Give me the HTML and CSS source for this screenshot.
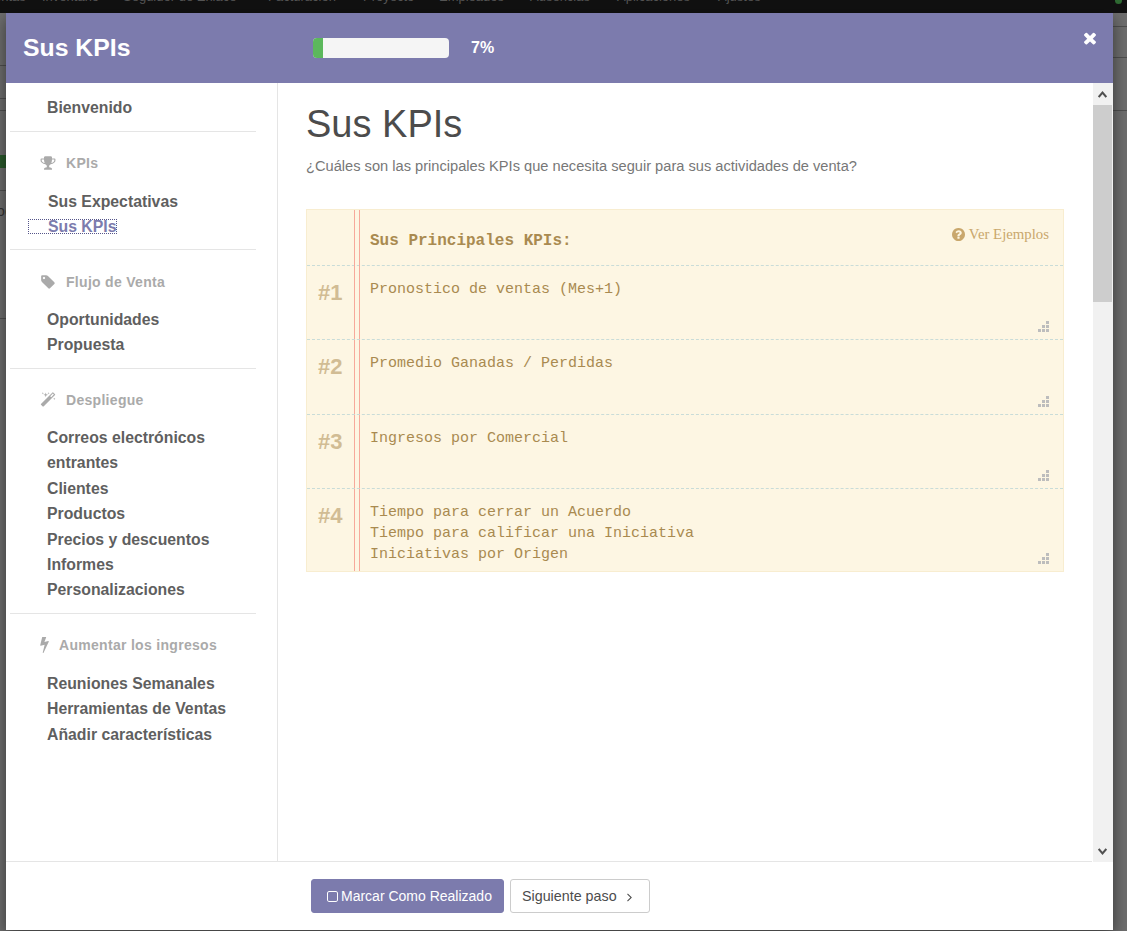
FILE: index.html
```html
<!DOCTYPE html>
<html lang="es">
<head>
  <meta charset="UTF-8">
  <title>Sus KPIs</title>
  <link rel="stylesheet" href="styles.css">
</head>
<body>

<svg class="icon-defs" aria-hidden="true">
  <symbol id="i-trophy" viewBox="0 0 1792 1792"><path d="M522 883q-74-162-74-371h-256v96q0 78 94.5 162t235.5 113zm1078-275v-96h-256q0 209-74 371 141-29 235.5-113t94.5-162zm128-128v128q0 71-41.5 143t-112 130-173 97.5-215.5 44.5q-42 54-95 95-38 34-52.5 72.5t-14.5 89.5q0 54 30.5 91t97.5 37q75 0 133.5 45.5t58.5 114.5v64q0 14-9 23t-23 9h-832q-14 0-23-9t-9-23v-64q0-69 58.5-114.5t133.5-45.5q67 0 97.5-37t30.5-91q0-51-14.5-89.5t-52.5-72.5q-53-41-95-95-113-5-215.5-44.5t-173-97.5-112-130-41.5-143v-128q0-40 28-68t68-28h288v-96q0-66 47-113t113-47h576q66 0 113 47t47 113v96h288q40 0 68 28t28 68z"/></symbol>
  <symbol id="i-tag" viewBox="0 0 1792 1792"><path d="M576 448q0-53-37.5-90.5t-90.5-37.5-90.5 37.5-37.5 90.5 37.5 90.5 90.5 37.5 90.5-37.5 37.5-90.5zm1067 576q0 53-37 90l-491 492q-39 37-91 37-53 0-90-37l-715-716q-38-37-64.5-101t-26.5-117v-416q0-52 38-90t90-38h416q53 0 117 26.5t102 64.5l715 714q37 39 37 91z"/></symbol>
  <symbol id="i-magic" viewBox="0 0 1792 1792"><path d="M1254 581l293-293-107-107-293 293zm447-293q0 27-18 45l-1286 1286q-18 18-45 18t-45-18l-198-198q-18-18-18-45t18-45l1286-1286q18-18 45-18t45 18l198 198q18 18 18 45zm-1351-190l98 30-98 30-30 98-30-98-98-30 98-30 30-98zm350 162l196 60-196 60-60 196-60-196-196-60 196-60 60-196zm930 478l98 30-98 30-30 98-30-98-98-30 98-30 30-98zm-640-640l98 30-98 30-30 98-30-98-98-30 98-30 30-98z"/></symbol>
  <symbol id="i-bolt" viewBox="448 128 896 1664"><path d="M1333 566q18 20 7 44l-540 1157q-13 25-42 25-4 0-14-2-17-5-25.5-19t-4.5-30l197-808-406 101q-4 1-12 1-18 0-31-11-18-15-13-39l201-825q4-14 16-23t28-9h328q19 0 32 12.5t13 29.5q0 8-5 18l-171 463 396-98q8-2 12-2 19 0 34 15z"/></symbol>
  <symbol id="i-question" viewBox="128 128 1536 1536"><path d="M1024 1376v-192q0-14-9-23t-23-9h-192q-14 0-23 9t-9 23v192q0 14 9 23t23 9h192q14 0 23-9t9-23zm256-672q0-88-55.5-163t-138.5-116-170-41q-243 0-371 213-15 24 8 42l132 100q7 6 19 6 16 0 25-12 53-68 86-92 34-24 86-24 48 0 85.5 26t37.5 59q0 38-20 61t-68 45q-63 28-115.5 86.5t-52.5 125.5v36q0 14 9 23t23 9h192q14 0 23-9t9-23q0-19 21.5-49.5t54.5-49.5q32-18 49-28.5t46-35 44.5-48 28-60.5 12.5-81zm384 192q0 209-103 385.5t-279.5 279.5-385.5 103-385.5-103-279.5-279.5-103-385.5 103-385.5 279.5-279.5 385.5-103 385.5 103 279.5 279.5 103 385.5z"/></symbol>
  <symbol id="i-close" viewBox="0 0 1792 1792"><path d="M1490 1322q0 40-28 68l-136 136q-28 28-68 28t-68-28l-294-294-294 294q-28 28-68 28t-68-28l-136-136q-28-28-28-68t28-68l294-294-294-294q-28-28-28-68t28-68l136-136q28-28 68-28t68 28l294 294 294-294q28-28 68-28t68 28l136 136q28 28 28 68t-28 68l-294 294 294 294q28 28 28 68z"/></symbol>
  <symbol id="i-square" viewBox="0 128 1408 1408"><path d="M1120 256h-832q-66 0-113 47t-47 113v832q0 66 47 113t113 47h832q66 0 113-47t47-113v-832q0-66-47-113t-113-47zm288 160v832q0 119-84.5 203.5t-203.5 84.5h-832q-119 0-203.5-84.5t-84.5-203.5v-832q0-119 84.5-203.5t203.5-84.5h832q119 0 203.5 84.5t84.5 203.5z"/></symbol>
  <symbol id="i-angle" viewBox="576 384 608 1152"><path d="M1171 960q0 13-10 23l-466 466q-10 10-23 10t-23-10l-50-50q-10-10-10-23t10-23l393-393-393-393q-10-10-10-23t10-23l50-50q10-10 23-10t23 10l466 466q10 10 10 23z"/></symbol>
  <symbol id="i-grip" viewBox="0 0 11 11"><path d="M8 0h3v3H8zM4 4h3v3H4zM8 4h3v3H8zM0 8h3v3H0zM4 8h3v3H4zM8 8h3v3H8z"/></symbol>
</svg>

<!-- the app behind the dialog -->
<nav class="topbar">
  <span class="nav-sales">Ventas</span>
  <span class="nav-inv">Inventario</span>
  <span class="nav-link">Seguidor de Enlace</span>
  <span class="nav-fact">Facturación</span>
  <span class="nav-proj">Proyecto</span>
  <span class="nav-emp">Empleados</span>
  <span class="nav-aus">Ausencias</span>
  <span class="nav-apps">Aplicaciones</span>
  <span class="nav-set">Ajustes</span>
  <i class="nav-avatar"></i>
</nav>
<span class="behind-text">Doc</span>

<div class="modal">
  <header class="modal-head">
    <h2 class="modal-title">Sus KPIs</h2>
    <div class="progress"><div class="progress-bar"></div></div>
    <span class="progress-val">7%</span>
    <svg class="close"><use href="#i-close"/></svg>
  </header>

  <div class="modal-body">
    <aside class="sidebar">
      <ul class="menu">
        <li>Bienvenido</li>
      </ul>
      <hr>
      <h4 class="menu-title title-kpi"><svg class="ic ic-trophy"><use href="#i-trophy"/></svg>KPIs</h4>
      <ul class="menu menu-kpi">
        <li>Sus Expectativas</li>
        <li class="active"><a>Sus KPIs</a></li>
      </ul>
      <hr>
      <h4 class="menu-title title-flow"><svg class="ic ic-tag"><use href="#i-tag"/></svg>Flujo de Venta</h4>
      <ul class="menu menu-flow">
        <li>Oportunidades</li>
        <li>Propuesta</li>
      </ul>
      <hr>
      <h4 class="menu-title title-deploy"><svg class="ic ic-magic"><use href="#i-magic"/></svg>Despliegue</h4>
      <ul class="menu menu-deploy">
        <li>Correos electrónicos entrantes</li>
        <li>Clientes</li>
        <li>Productos</li>
        <li>Precios y descuentos</li>
        <li>Informes</li>
        <li>Personalizaciones</li>
      </ul>
      <hr>
      <h4 class="menu-title title-more"><svg class="ic ic-bolt"><use href="#i-bolt"/></svg>Aumentar los ingresos</h4>
      <ul class="menu">
        <li>Reuniones Semanales</li>
        <li>Herramientas de Ventas</li>
        <li>Añadir características</li>
      </ul>
    </aside>

    <main class="content">
      <h1>Sus KPIs</h1>
      <p class="lead">¿Cuáles son las principales KPIs que necesita seguir para sus actividades de venta?</p>

      <div class="paper">
        <div class="paper-head">
          <b>Sus Principales KPIs:</b>
          <span class="examples"><svg class="ic-q"><use href="#i-question"/></svg>Ver Ejemplos</span>
        </div>
        <div class="paper-row row-a">
          <span class="num">#1</span>
          <div class="note">Pronostico de ventas (Mes+1)</div>
          <svg class="grip"><use href="#i-grip"/></svg>
        </div>
        <div class="paper-row row-b">
          <span class="num">#2</span>
          <div class="note">Promedio Ganadas / Perdidas</div>
          <svg class="grip"><use href="#i-grip"/></svg>
        </div>
        <div class="paper-row row-a">
          <span class="num">#3</span>
          <div class="note">Ingresos por Comercial</div>
          <svg class="grip"><use href="#i-grip"/></svg>
        </div>
        <div class="paper-row row-c">
          <span class="num">#4</span>
          <div class="note">Tiempo para cerrar un Acuerdo<br>Tiempo para calificar una Iniciativa<br>Iniciativas por Origen</div>
          <svg class="grip"><use href="#i-grip"/></svg>
        </div>
      </div>
    </main>

    <div class="scrollbar">
      <div class="sb-btn"><svg viewBox="0 0 9 7"><path d="M0.7 6L4.5 1.6 8.3 6"/></svg></div>
      <div class="sb-thumb"></div>
      <div class="sb-track"></div>
      <div class="sb-btn sb-down"><svg viewBox="0 0 9 7"><path d="M0.7 1L4.5 5.4 8.3 1"/></svg></div>
    </div>
  </div>

  <footer class="modal-foot">
    <button class="btn btn-primary"><svg class="ic-sq"><use href="#i-square"/></svg>Marcar Como Realizado</button>
    <button class="btn btn-default">Siguiente paso<svg class="ic-angle"><use href="#i-angle"/></svg></button>
  </footer>
</div>

</body>
</html>
```

FILE: styles.css
```css
* {
  box-sizing: border-box;
}
html, body {
  height: 100%;
}
body {
  margin: 0;
  overflow: hidden;
  position: relative;
  font-family: "Liberation Sans", Arial, sans-serif;
  font-size: 14px;
  color: #4c4c4c;
  background-color: #6e6e6e;
  /* faded rows of the page behind the dialog */
  background-image:
    linear-gradient(#4f4f4f, #4f4f4f),
    linear-gradient(#4f4f4f, #4f4f4f),
    linear-gradient(#4f4f4f, #4f4f4f),
    linear-gradient(#2a5a2c, #2a5a2c),
    linear-gradient(#4f4f4f, #4f4f4f),
    linear-gradient(#4f4f4f, #4f4f4f),
    linear-gradient(#4f4f4f, #4f4f4f),
    linear-gradient(#4f4f4f, #4f4f4f),
    linear-gradient(#4f4f4f, #4f4f4f);
  background-repeat: no-repeat;
  background-size: 6px 1px, 6px 1px, 100% 1px, 6px 13px, 6px 1px, 6px 1px, 14px 1px, 14px 1px, 6px 1px;
  background-position: 0 65px, 0 98px, 0 110px, 0 155px, 0 190px, 0 318px, right 0 top 26px, right 0 top 57px, 0 0;
}
.icon-defs {
  position: absolute;
  width: 0;
  height: 0;
}

/* app behind */
.topbar {
  height: 13px;
  background-color: #111;
  color: #555;
  font-size: 13px;
  line-height: 13px;
  overflow: hidden;
  position: relative;
}
.topbar span {
  position: absolute;
  top: -10px;
  white-space: nowrap;
}
.nav-sales { left: -14px; }
.nav-inv { left: 42px; }
.nav-link { left: 123px; }
.nav-fact { left: 268px; }
.nav-proj { left: 363px; }
.nav-emp { left: 439px; }
.nav-aus { left: 530px; }
.nav-apps { left: 617px; }
.nav-set { left: 718px; }
.nav-avatar {
  position: absolute;
  top: -4px;
  left: 1115px;
  width: 7px;
  height: 8px;
  border-radius: 0 0 4px 4px;
  background-color: #2f6a33;
}
.behind-text {
  position: absolute;
  left: -13px;
  top: 203px;
  color: #333;
  font-size: 14px;
}

/* dialog */
.modal {
  position: absolute;
  left: 6px;
  top: 13px;
  width: 1107px;
  height: 917px;
  background-color: #fff;
  display: flex;
  flex-direction: column;
  box-shadow: 0 5px 15px rgba(0,0,0,0.5);
}
.modal-head {
  height: 70px;
  flex: none;
  background-color: #7c7bad;
  color: #fff;
  display: flex;
  align-items: center;
  padding-left: 17px;
}
.modal-title {
  margin: 0;
  width: 290px;
  font-size: 24.8px;
  font-weight: bold;
}
.progress {
  width: 136px;
  height: 20px;
  background-color: #f5f5f5;
  border-radius: 4px;
  overflow: hidden;
}
.progress-bar {
  width: 10px;
  height: 100%;
  background-color: #5cb85c;
}
.progress-val {
  margin-left: 22px;
  font-size: 16px;
  font-weight: bold;
}
.close {
  width: 18px;
  height: 18px;
  fill: #fff;
  align-self: flex-start;
  margin: 16px 14px 0 auto;
}

.modal-body {
  flex: 1;
  display: flex;
  min-height: 0;
}

/* sidebar */
.sidebar {
  width: 272px;
  flex: none;
  border-right: 1px solid #e5e5e5;
  padding: 12px 21px 0 4px;
}
.sidebar hr {
  border: 0;
  border-top: 1px solid #e5e5e5;
  margin: 11px 0 0;
}
.menu {
  list-style: none;
  margin: 0;
  padding: 0 0 0 37px;
  font-size: 15.8px;
  font-weight: bold;
  line-height: 25.4px;
  color: #5f5f5f;
}
.menu-kpi {
  padding-left: 38px;
  margin-bottom: -2.5px;
}
.menu-flow {
  margin-bottom: -1px;
}
.menu-deploy {
  margin-bottom: -0.6px;
}
.active {
  color: #7c7bad;
}
.active a {
  display: inline-block;
  line-height: 13px;
  padding: 0 0 0 19px;
  margin-left: -19px;
  outline: 1px dotted #55558a;
  vertical-align: 1px;
}
.menu-title {
  margin: 21px 0 15px;
  padding-left: 30px;
  height: 20px;
  display: flex;
  align-items: center;
  font-size: 14px;
  font-weight: bold;
  line-height: 20px;
  letter-spacing: 0.3px;
  color: #aaa;
}
.title-kpi { margin-bottom: 16px; }
.title-flow { margin-top: 22px; }
.title-deploy { margin-top: 21.5px; }
.title-more { margin-top: 20.8px; margin-bottom: 15.8px; }
.ic {
  height: 16px;
  fill: #aaa;
  flex: none;
  margin-right: 10px;
}
.ic-trophy { width: 16px; }
.ic-tag { width: 16px; }
.ic-magic { width: 16px; }
.ic-bolt { width: 9px; }

/* main */
.content {
  flex: 1;
  min-width: 0;
  padding: 0 29px 0 28px;
}
.content h1 {
  margin: 20px 0 0;
  font-size: 38px;
  font-weight: normal;
  line-height: 42px;
  color: #4c4c4c;
}
.lead {
  margin: 11px 0 32px;
  font-size: 14.65px;
  line-height: 21px;
  color: #777;
}
.paper {
  position: relative;
  background-color: #fdf6e3;
  border: 1px solid #f8edd0;
  font-family: "Liberation Mono", "Courier New", monospace;
  color: #a98a50;
}
.paper::before {
  content: "";
  position: absolute;
  top: 0;
  bottom: 0;
  left: 47px;
  width: 4px;
  border-left: 1px solid #f7a99b;
  border-right: 1px solid #f7a99b;
}
.paper-head {
  height: 56px;
  padding: 20px 14px 0 63px;
  border-bottom: 1px dashed #c9dcd8;
  display: flex;
  justify-content: space-between;
  font-size: 16px;
  line-height: 22px;
}
.examples {
  margin-top: -7px;
  font-family: "Liberation Serif", "Times New Roman", serif;
  font-size: 14.8px;
  color: #c9a76c;
  display: flex;
  align-items: center;
  height: 22px;
}
.ic-q {
  width: 13px;
  height: 13px;
  fill: #c9a76c;
  margin-right: 4px;
}
.paper-row {
  position: relative;
  display: flex;
  border-bottom: 1px dashed #c9dcd8;
}
.row-a { height: 74px; }
.row-b { height: 75px; }
.row-c { height: 82px; border-bottom: 0; }
.num {
  width: 63px;
  flex: none;
  padding: 13px 0 0 11px;
  font-family: "Liberation Sans", Arial, sans-serif;
  font-size: 22px;
  font-weight: bold;
  line-height: 28px;
  color: #d1bc94;
}
.note {
  padding-top: 13px;
  font-size: 15px;
  line-height: 21px;
}
.grip {
  position: absolute;
  right: 14px;
  bottom: 7px;
  width: 11px;
  height: 11px;
  fill: #bdbdbd;
}

/* fake scrollbar, same look as the browser one */
.scrollbar {
  width: 20px;
  flex: none;
  margin-bottom: -1px;
  background-color: #f1f1f1;
  display: flex;
  flex-direction: column;
}
.sb-btn {
  height: 22px;
  flex: none;
  display: flex;
  justify-content: center;
  padding: 8px 1px 0 0;
}
.sb-btn svg {
  width: 9px;
  height: 7px;
  fill: none;
  stroke: #505050;
  stroke-width: 2;
}
.sb-thumb {
  height: 197px;
  flex: none;
  margin-right: 1px;
  background-color: #cdcdcd;
}
.sb-track {
  flex: 1;
}

/* footer */
.modal-foot {
  height: 69px;
  flex: none;
  margin-right: 21px;
  border-top: 1px solid #e5e5e5;
  padding: 17px 0 0 305px;
  display: flex;
  gap: 6px;
  align-items: flex-start;
}
.btn {
  height: 34px;
  border-radius: 3px;
  font-family: inherit;
  font-size: 14px;
  line-height: 20px;
  padding: 0;
  display: flex;
  align-items: center;
}
.btn-primary {
  width: 193px;
  padding-left: 15px;
  background-color: #7c7bad;
  border: 1px solid #7c7bad;
  color: #fff;
}
.btn-default {
  width: 140px;
  padding-left: 11px;
  background-color: #fff;
  border: 1px solid #ccc;
  color: #4c4c4c;
  font-size: 14.3px;
}
.ic-sq {
  width: 11px;
  height: 11px;
  fill: #fff;
  margin-right: 3px;
}
.ic-angle {
  width: 5px;
  height: 9px;
  fill: #4c4c4c;
  margin-left: 10px;
  margin-top: 2px;
}
```
